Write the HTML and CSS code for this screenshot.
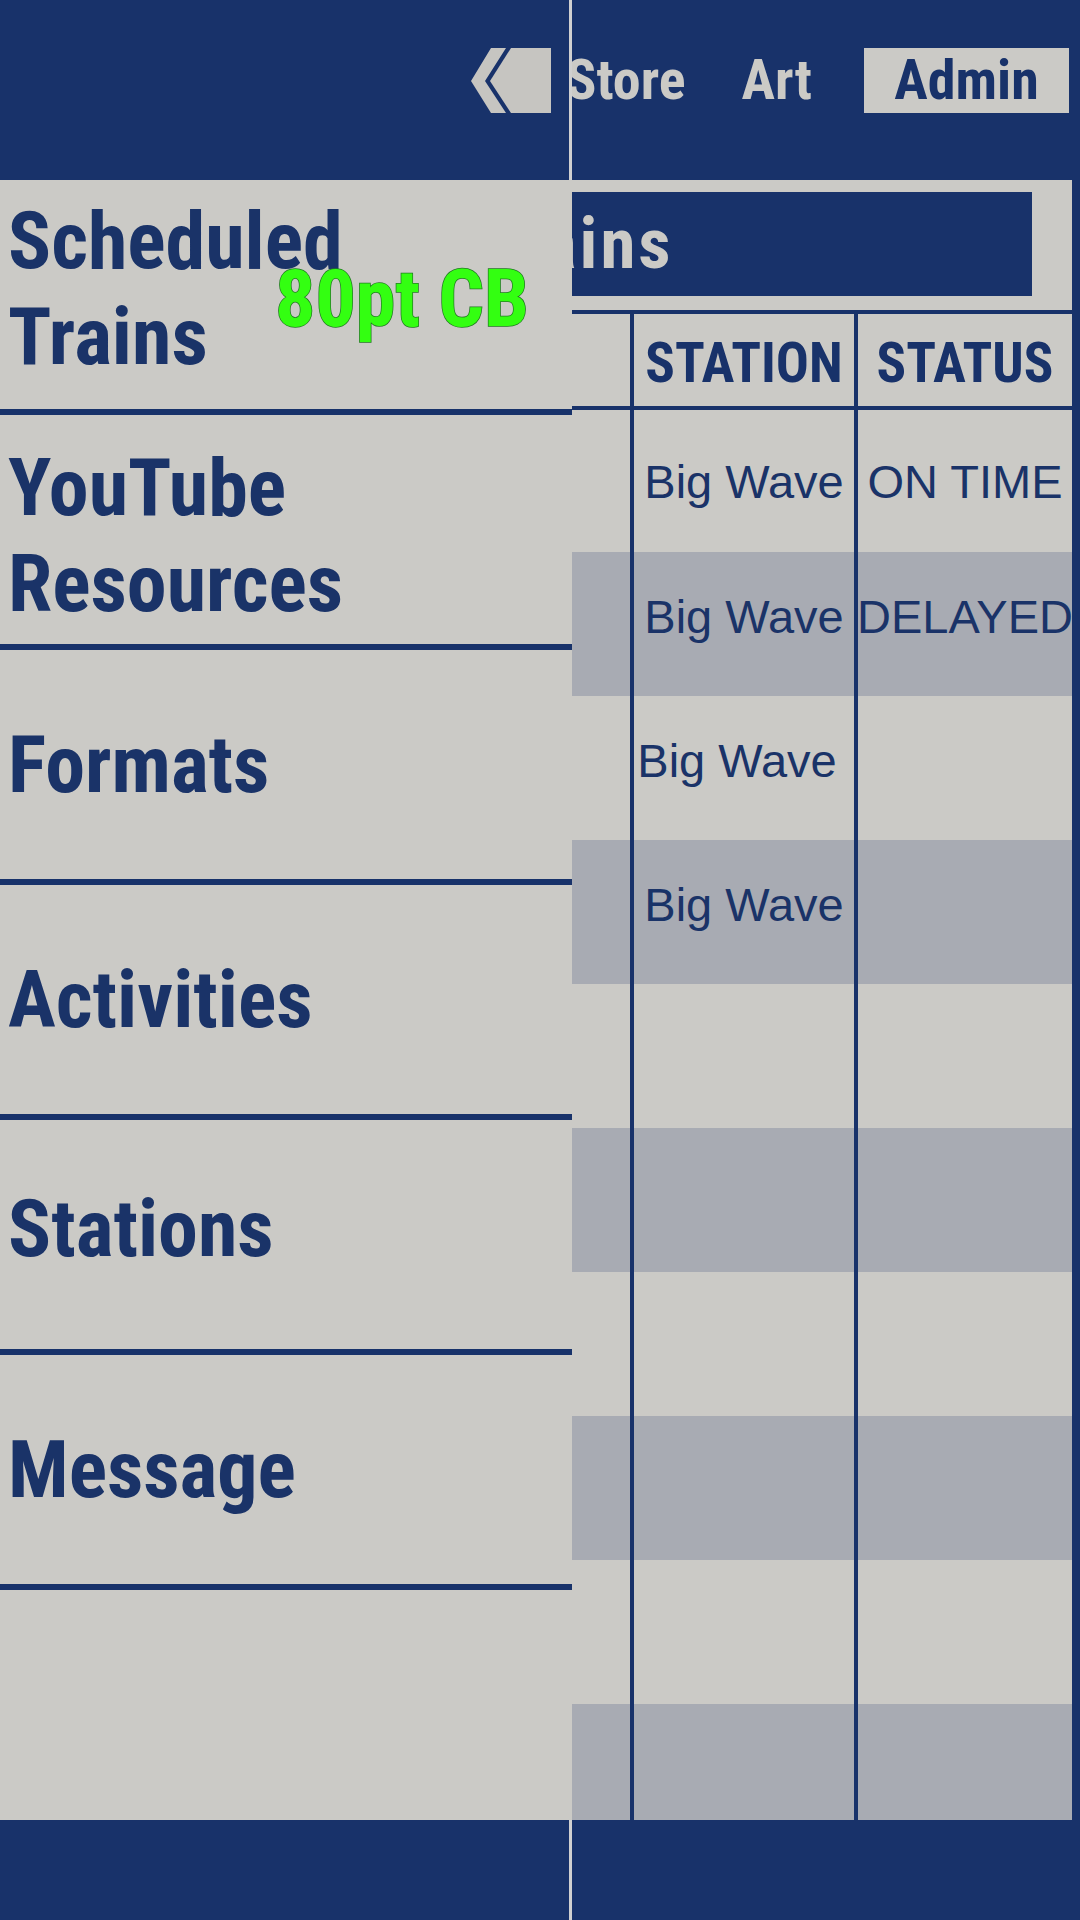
FILE: index.html
```html
<!DOCTYPE html>
<html lang="en">
<head>
<meta charset="utf-8">
<title>Scheduled Trains</title>
<link rel="stylesheet" href="styles.css">
</head>
<body>
<div class="page">
  <header class="topbar">
    <nav class="nav">
      <a class="nav-item">Store</a>
      <a class="nav-item">Art</a>
      <a class="nav-item active">Admin</a>
    </nav>
  </header>
  <main class="content">
    <div class="title-bar"><h1 class="title">Scheduled Trains</h1></div>
    <div class="table">
      <div class="row head">
        <div class="cell"></div>
        <div class="cell">STATION</div>
        <div class="cell">STATUS</div>
      </div>
      <div class="row">
        <div class="cell"></div>
        <div class="cell">Big Wave</div>
        <div class="cell">ON TIME</div>
      </div>
      <div class="row">
        <div class="cell"></div>
        <div class="cell">Big Wave</div>
        <div class="cell">DELAYED</div>
      </div>
      <div class="row">
        <div class="cell"></div>
        <div class="cell shift-left">Big Wave</div>
        <div class="cell"></div>
      </div>
      <div class="row">
        <div class="cell"></div>
        <div class="cell">Big Wave</div>
        <div class="cell"></div>
      </div>
      <div class="row"><div class="cell"></div><div class="cell"></div><div class="cell"></div></div>
      <div class="row"><div class="cell"></div><div class="cell"></div><div class="cell"></div></div>
      <div class="row"><div class="cell"></div><div class="cell"></div><div class="cell"></div></div>
      <div class="row"><div class="cell"></div><div class="cell"></div><div class="cell"></div></div>
      <div class="row"><div class="cell"></div><div class="cell"></div><div class="cell"></div></div>
      <div class="row"><div class="cell"></div><div class="cell"></div><div class="cell"></div></div>
    </div>
  </main>
  <footer class="footer"></footer>
</div>

<aside class="drawer">
  <div class="drawer-head">
    <button class="collapse" aria-label="Close menu">
      <svg width="80" height="66" viewBox="0 0 80 66">
        <polygon points="20,0 35,0 14,33 35,65 20,65 0,33" fill="#c6c5c1"/>
        <polygon points="40,0 80,0 80,65 40,65 19,33" fill="#c6c5c1"/>
      </svg>
    </button>
  </div>
  <ul class="menu">
    <li class="menu-item item-up">Scheduled<br>Trains</li>
    <li class="menu-item item-down">YouTube<br>Resources</li>
    <li class="menu-item">Formats</li>
    <li class="menu-item">Activities</li>
    <li class="menu-item item-up">Stations</li>
    <li class="menu-item">Message</li>
  </ul>
  <div class="drawer-foot"></div>
  <span class="font-tag">80pt CB</span>
</aside>
</body>
</html>
```

FILE: styles.css
```css
html, body {
  margin: 0;
  padding: 0;
}

body {
  width: 1080px;
  height: 1920px;
  overflow: hidden;
  position: relative;
  background: #18326a;
  font-family: Roboto, "DejaVu Sans Condensed", sans-serif;
  font-stretch: 75%;
  font-weight: bold;
  color: #18326a;
}

.page {
  display: grid;
  grid-template-rows: 180px 1640px 100px;
  width: 1080px;
  height: 1920px;
}

/* top navigation */
.topbar {
  display: flex;
  justify-content: flex-end;
  align-items: flex-start;
  padding: 48px 11px 0 0;
}

.nav {
  display: flex;
  align-items: flex-start;
  gap: 56px;
}

.nav-item {
  display: block;
  height: 65px;
  line-height: 65px;
  font-size: 56px;
  color: #cbcac6;
}

.nav-item.active {
  background: #cbcac6;
  color: #18326a;
  width: 205px;
  text-align: center;
  margin-left: -4px;
}

/* main content */
.content {
  background: #cbcac6;
  margin-right: 8px;
  display: flex;
  flex-direction: column;
  overflow: hidden;
}

.title-bar {
  margin: 12px 40px 14px 12px;
  height: 104px;
  flex: none;
  background: #18326a;
  display: flex;
  align-items: center;
}

.title {
  margin: 0;
  padding-left: 125px;
  font-size: 71px;
  line-height: 80px;
  letter-spacing: 3px;
  color: #cbcac6;
  white-space: nowrap;
}

.table {
  display: flex;
  flex-direction: column;
}

.row {
  display: grid;
  grid-template-columns: 630px 224px 218px;
  height: 144px;
  flex: none;
}

.row.head {
  height: 100px;
  box-sizing: border-box;
  border-top: 4px solid #18326a;
  border-bottom: 4px solid #18326a;
}

.row:nth-child(2) {
  height: 142px;
}

.row:nth-child(odd):not(.head) {
  background: #a8abb3;
}

.cell {
  display: flex;
  align-items: center;
  justify-content: center;
  font-family: "Liberation Sans", Arial, sans-serif;
  font-stretch: normal;
  font-weight: normal;
  font-size: 47px;
  color: #1a3368;
  white-space: nowrap;
  box-sizing: border-box;
}

.row:nth-child(n+3) .cell {
  padding-bottom: 16px;
}

.cell.shift-left {
  padding-right: 14px;
}

.cell + .cell {
  border-left: 4px solid #18326a;
}

.row.head .cell {
  font-family: Roboto, "DejaVu Sans Condensed", sans-serif;
  font-stretch: 75%;
  font-weight: bold;
  font-size: 55px;
  color: #18326a;
  padding-top: 6px;
}

.footer {
  background: #18326a;
}

/* slide-out drawer */
.drawer {
  position: absolute;
  top: 0;
  left: 0;
  width: 572px;
  height: 1920px;
  display: grid;
  grid-template-rows: 180px 1640px 100px;
  z-index: 2;
}

.drawer-head {
  background: #18326a;
  border-right: 3px solid #d0d0d0;
  display: flex;
  justify-content: flex-end;
  align-items: flex-start;
  padding: 48px 18px 0 0;
}

.collapse {
  border: 0;
  padding: 0;
  margin: 0;
  background: none;
  display: block;
}

.collapse svg {
  display: block;
}

.menu {
  list-style: none;
  margin: 0;
  padding: 0;
  background: #cbcac6;
}

.menu-item {
  height: 229px;
  box-sizing: content-box;
  border-bottom: 6px solid #18326a;
  display: flex;
  align-items: center;
  padding-left: 8px;
  font-size: 80px;
  line-height: 96px;
  color: #1a3368;
}

.menu-item.item-up {
  height: 217px;
  padding-bottom: 12px;
}

.menu-item.item-down {
  height: 217px;
  padding-top: 12px;
}

.drawer-foot {
  background: #18326a;
  border-right: 3px solid #d0d0d0;
}

.font-tag {
  position: absolute;
  left: 275px;
  top: 259px;
  font-size: 80px;
  line-height: 80px;
  color: #33ff11;
  -webkit-text-stroke: 1.5px #237a23;
  paint-order: stroke fill;
  white-space: nowrap;
}
```
